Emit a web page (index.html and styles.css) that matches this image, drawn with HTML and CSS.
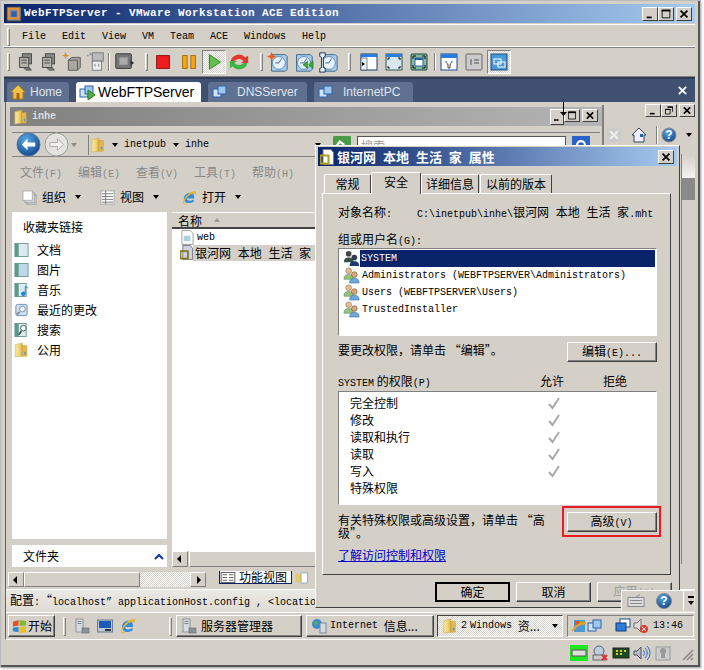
FILE: index.html
```html
<!DOCTYPE html>
<html lang="zh-Hans">
<head>
<meta charset="utf-8">
<title>WebFTPServer - VMware Workstation ACE Edition</title>
<link rel="stylesheet" href="styles.css">
</head>
<body>
<svg class="defs" aria-hidden="true">
  <defs>
    <linearGradient id="fold" x1="0" x2="1" y1="0" y2="0"><stop offset="0" stop-color="#f7e9a8"/><stop offset=".6" stop-color="#f2d36f"/><stop offset="1" stop-color="#d9a93a"/></linearGradient>
    <radialGradient id="blue" cx=".4" cy=".3" r=".8"><stop offset="0" stop-color="#5aa8e6"/><stop offset="1" stop-color="#0a3f86"/></radialGradient>
    <symbol id="i-folder" viewBox="0 0 16 18"><path d="M1 3 9 1v15l-8 1z" fill="url(#fold)" stroke="#c9a84e" stroke-width=".6"/><path d="M9 4h5v12H9z" fill="#e3b94f" stroke="#c09a3a" stroke-width=".6"/><path d="M11 11h2v3h-2z" fill="#5a9ad0"/></symbol>
    <symbol id="i-vm" viewBox="0 0 16 16"><rect x="1" y="5" width="8" height="8" fill="#cfe3f7" stroke="#2a62a8"/><rect x="6" y="2" width="8" height="8" fill="#9cc6ee" stroke="#2a62a8"/></symbol>
    <symbol id="i-users" viewBox="0 0 18 18"><circle cx="6" cy="4" r="3" fill="#e8bc90" stroke="#7a6a50" stroke-width=".6"/><path d="M1 13c0-4 2-5 5-5s5 1 5 5z" fill="#93c47d" stroke="#5f8a50" stroke-width=".6"/><circle cx="12" cy="8" r="3" fill="#d9a877" stroke="#6a4a30" stroke-width=".6"/><path d="M7 17c0-4 2-5 5-5s5 1 5 5z" fill="#6fa8dc" stroke="#3d6fa0" stroke-width=".6"/></symbol>
    <symbol id="i-usersdark" viewBox="0 0 18 18"><circle cx="6" cy="4" r="3" fill="#444"/><path d="M1 13c0-4 2-5 5-5s5 1 5 5z" fill="#37524a"/><circle cx="12" cy="8" r="3" fill="#333a50"/><path d="M7 17c0-4 2-5 5-5s5 1 5 5z" fill="#1b3a72"/></symbol>
    <symbol id="i-check" viewBox="0 0 14 14"><path d="M2 8l3.500 4L12 2" fill="none" stroke="#aaa" stroke-width="2"/></symbol>
    <symbol id="i-server" viewBox="0 0 16 16"><rect x="2" y="1" width="7" height="13" fill="#d6dbe0" stroke="#7d8792" stroke-width=".8"/><rect x="3.500" y="3" width="4" height="1" fill="#7d8792"/><rect x="3.500" y="5" width="4" height="1" fill="#7d8792"/><rect x="8" y="10" width="7" height="5" fill="#8a929a" stroke="#5c646c" stroke-width=".6"/></symbol>
    <symbol id="i-ie" viewBox="0 0 16 16"><path d="M2 9c0-4 4-7 8-6 3 1 3 4 3 6H5c0 3 5 3 7 1l1 2c-3 3-11 3-11-3z" fill="#2f8fdc"/><path d="M1 13C3 6 9 1 14 1c2 1 1 3 0 4-1-2-7-2-12 8 0 1 2 2 4 1-2 2-5 2-5-1z" fill="#f0b429"/></symbol>
    <symbol id="i-clock" viewBox="0 0 24 24"><path d="M5 4h15l2 2v14l-2 2H5z" fill="#a8cdea" stroke="#34618e"/><circle cx="13" cy="13" r="7" fill="#e6f1fa" stroke="#5c87ad"/><path d="M13 13l3-5M13 13H9" stroke="#34618e" fill="none"/></symbol>
    <symbol id="i-ghost" viewBox="0 0 24 24"><rect x="8" y="3" width="10" height="11" fill="#8a8a84" stroke="#444"/><rect x="5" y="7" width="10" height="11" fill="#b4b4ac" stroke="#444"/><path d="M7 10h6M7 13h6" stroke="#444"/><path d="M9 18l3 3h6l-2-3z" fill="#777" stroke="#444" stroke-width=".6"/></symbol>
    <symbol id="i-win" viewBox="0 0 18 18"><rect x="1" y="1" width="16" height="16" fill="#fff" stroke="#1c3c64"/><rect x="1" y="1" width="16" height="3" fill="#2a7dd8"/><rect x="1" y="5" width="6" height="12" fill="#eee" stroke="#1c3c64" stroke-width=".6"/><path d="M2 9l3 2-3 2z"/></symbol>
    <symbol id="i-x" viewBox="0 0 16 14"><path d="M4 3l8 8M12 3l-8 8" stroke="#000" stroke-width="2"/></symbol>
    <symbol id="i-min" viewBox="0 0 16 14"><path d="M4 10h6v2H4z" fill="#000"/></symbol>
    <symbol id="i-max" viewBox="0 0 16 14"><path d="M3.500 2.500h9v9h-9z" fill="none" stroke="#000"/><path d="M3 2h10v2H3z"/></symbol>
    <symbol id="i-res" viewBox="0 0 16 14"><path d="M6.500 2.500h6v6M3.500 5.500h6v6h-6z" fill="none" stroke="#000"/><path d="M6 2h7v1.500H6zM3 5h7v1.500H3z"/></symbol>
  </defs>
</svg>

<div class="vm">
  <header class="vm-title">
    <svg class="vm-logo" viewBox="0 0 18 18"><rect x="1" y="1" width="16" height="16" fill="#7c8aa6" stroke="#333"/><rect x="3" y="3" width="11" height="11" fill="none" stroke="#f09020" stroke-width="2"/><rect x="6" y="6" width="6" height="6" fill="#2a62a8"/></svg>
    <span class="vm-title-text">WebFTPServer - VMware Workstation ACE Edition</span>
    <span class="wctl vm-ctl"><svg class="wb"><use href="#i-min"/></svg><svg class="wb"><use href="#i-max"/></svg><svg class="wb gap"><use href="#i-x"/></svg></span>
  </header>

  <nav class="vm-menu">
    <i class="grip"></i>
    <span>File</span><span>Edit</span><span>View</span><span>VM</span><span>Team</span><span>ACE</span><span>Windows</span><span>Help</span>
  </nav>

  <div class="vm-tools">
    <i class="grip"></i>
    <span class="tb tb-n"><svg><use href="#i-ghost"/></svg></span>
    <span class="tb tb-n"><svg><use href="#i-ghost"/></svg></span>
    <span class="tb tb-n"><svg viewBox="0 0 24 24"><path d="M5 1l1 3 3 1-3 1-1 3-1-3-3-1 3-1z" fill="#d89018"/><path d="M8 10l4-3h9v11l-3 3H8z" fill="#a8a8a0" stroke="#555"/><path d="M8 10h10v11" fill="none" stroke="#555"/></svg></span>
    <span class="tb tb-n"><svg viewBox="0 0 24 24"><path d="M6 2h2v3H6zM3 4h2v2H3z" fill="#999"/><rect x="9" y="2" width="12" height="9" fill="#bbb" stroke="#777"/><rect x="9" y="11" width="10" height="10" fill="#eee" stroke="#777"/><path d="M12 14v3M16 14v3" stroke="#777"/></svg></span>
    <i class="sep"></i>
    <span class="tb"><svg viewBox="0 0 24 24"><rect x="3" y="3" width="17" height="16" rx="1" fill="#777" stroke="#333"/><rect x="7" y="7" width="9" height="8" fill="#aaa"/><path d="M19 10l4 3-4 3z" fill="#333"/></svg></span>
    <i class="grip g9"></i>
    <span class="tb m3"><svg viewBox="0 0 24 24"><rect x="5" y="5" width="14" height="14" fill="#ee1c1c" stroke="#8a1010"/></svg></span>
    <span class="tb m2"><svg viewBox="0 0 24 24"><rect x="5" y="5" width="5" height="14" fill="#f5a516" stroke="#a06a08"/><rect x="14" y="5" width="5" height="14" fill="#f5a516" stroke="#a06a08"/></svg></span>
    <span class="tb m1 tb-on"><svg viewBox="0 0 24 24"><path d="M7 4l12 8-12 8z" fill="#5fc24a" stroke="#2a7a20"/></svg></span>
    <span class="tb m1"><svg viewBox="0 0 24 24"><path d="M3 11a9 8 0 0 1 16-4l3-2v8h-8l3-2a6 5 0 0 0-10 0z" fill="#e23a2a"/><path d="M21 13a9 8 0 0 1-16 4l-3 2v-8h8l-3 2a6 5 0 0 0 10 0z" fill="#3eb53e"/></svg></span>
    <i class="grip g9"></i>
    <span class="tb m3"><svg viewBox="0 0 24 24"><use href="#i-clock"/><path d="M5 1l1.500 3.500L10 6 6.500 7.500 5 11 3.500 7.500 0 6l3.500-1.500z" fill="#ef5a1a"/></svg></span>
    <span class="tb m1"><svg viewBox="0 0 24 24"><use href="#i-clock"/><path d="M12 15l5-4v8zM18 15l5-4v8z" fill="#3aa83a" stroke="#1c6a1c" stroke-width=".6"/></svg></span>
    <span class="tb m1"><svg viewBox="0 0 24 24"><use href="#i-clock"/><path d="M3 2h6v4L7 7v11l2 1v4H3v-4l2-1V7L3 6z" fill="#e8f0f8" stroke="#1a2a4a"/></svg></span>
    <i class="grip g8"></i>
    <span class="tb tb-v m6"><svg><use href="#i-win"/></svg></span>
    <span class="tb tb-v m1"><svg viewBox="0 0 18 18"><rect x="1" y="1" width="16" height="16" fill="#d8e8f0" stroke="#2a5a50"/><rect x="1" y="1" width="16" height="3" fill="#2a7dd8"/><path d="M3 7V5h2M13 5h2v2M15 13v2h-2M5 15H3v-2" stroke="#111" fill="none"/></svg></span>
    <span class="tb tb-v m1"><svg viewBox="0 0 18 18"><rect x="1" y="1" width="16" height="16" rx="1" fill="#84b8a0" stroke="#1c4a40"/><rect x="5" y="5" width="8" height="8" fill="#fff" stroke="#2a62a8"/><rect x="5" y="5" width="8" height="2" fill="#2a62a8"/><path d="M3 6V3h3M12 3h3v3M15 12v3h-3M6 15H3v-3" stroke="#111" fill="none"/></svg></span>
    <i class="sep sep-v"></i>
    <span class="tb tb-v m1"><svg viewBox="0 0 18 18"><rect x="1" y="1" width="16" height="16" fill="#fff" stroke="#1a4a9a"/><rect x="1" y="1" width="16" height="4" fill="#2a7dd8"/><path d="M6 8c0 3 2 2 2 4v3h2v-3c0-2 2-1 2-4" fill="none" stroke="#444"/></svg></span>
    <span class="tb tb-v m1"><svg viewBox="0 0 18 18"><rect x="1" y="1" width="16" height="16" rx="1" fill="#ccc" stroke="#666"/><path d="M6 6v6M9 7h5M9 10h5" stroke="#555"/></svg></span>
    <span class="tb tb-v m1 tb-on"><svg viewBox="0 0 18 18"><rect x="1" y="1" width="16" height="16" fill="#4a9ad8" stroke="#1c4a80"/><rect x="4" y="6" width="7" height="5" fill="none" stroke="#fff"/><rect x="8" y="9" width="7" height="5" fill="none" stroke="#fff"/></svg></span>
  </div>

  <div class="vm-tabs">
    <span class="tab tab-home"><svg viewBox="0 0 16 16"><path d="M1 8l7-7 7 7h-2v7H3V8z" fill="#f0c048" stroke="#b07a18"/><rect x="6.500" y="9" width="3" height="6" fill="#a86a18"/></svg>Home</span>
    <span class="tab tab-active"><svg viewBox="0 0 16 16"><use href="#i-vm"/><path d="M9 6l7 5-7 5z" fill="#4ab23c" stroke="#2a7a20"/></svg>WebFTPServer</span>
    <span class="tab tab-dns"><svg><use href="#i-vm"/></svg><span>DNSServer</span></span>
    <span class="tab tab-pc"><svg><use href="#i-vm"/></svg><span>InternetPC</span></span>
    <svg class="tab-close" viewBox="0 0 12 12"><path d="M2 2l8 8M10 2l-8 8" stroke="#fff" stroke-width="2"/></svg>
  </div>

  <main class="guest">
    <div class="guest-main">
      <aside class="mmc">
        <span class="wctl mmc-ctl"><svg class="wb small"><use href="#i-min"/></svg><svg class="wb small"><use href="#i-res"/></svg><svg class="wb small gap"><use href="#i-x"/></svg></span>
        <div class="mmc-tools">
          <svg viewBox="0 0 16 16"><rect x="1" y="1" width="14" height="14" fill="#ccc"/><path d="M4 4l8 8M12 4l-8 8" stroke="#eee" stroke-width="2"/></svg>
          <svg viewBox="0 0 16 16"><path d="M1 8l7-7 7 7h-2v7H3V8z" fill="#eef" stroke="#345"/><rect x="9" y="7" width="3" height="3" fill="#26a"/></svg>
          <i class="sep"></i>
          <svg viewBox="0 0 16 16"><circle cx="8" cy="8" r="7" fill="url(#blue)" stroke="#888"/><text x="8" y="12" class="qm">?</text></svg>
          <i class="caret"></i>
        </div>
        <div class="mmc-scroll"><i class="track"></i><i class="thumb"></i></div>
      </aside>

      <section class="explorer">
        <div class="ex-title">
          <svg><use href="#i-folder"/></svg><b>inhe</b>
          <span class="wctl"><svg class="wb small"><use href="#i-min"/></svg><svg class="wb small"><use href="#i-max"/></svg><svg class="wb small gap"><use href="#i-x"/></svg></span>
        </div>
        <div class="ex-addr">
          <span class="nav-btn back"><svg viewBox="0 0 26 26"><circle cx="13" cy="13" r="12" fill="url(#blue)" stroke="#5a7a9a"/><path d="M6 13l6-6v4h8v4h-8v4z" fill="#fff"/></svg></span>
          <span class="nav-btn"><svg viewBox="0 0 26 26"><circle cx="13" cy="13" r="12" fill="#e4e2dc" stroke="#999"/><path d="M20 13l-6-6v4H6v4h8v4z" fill="#f2f2f0" stroke="#aaa"/></svg></span>
          <i class="caret light"></i>
          <span class="crumb"><svg><use href="#i-folder"/></svg><i class="caret"></i><span class="lat">inetpub</span><i class="caret"></i><span class="lat">inhe</span></span>
          <i class="caret push"></i>
          <span class="go"><svg viewBox="0 0 16 16"><rect width="16" height="16" rx="1" fill="#4a9a4a"/><path d="M3 9l3-4 4 3" stroke="#fff" fill="none" stroke-width="2"/></svg></span>
          <span class="search">搜索</span>
          <span class="sbtn"><svg viewBox="0 0 16 16"><rect width="16" height="16" fill="#2a62c8"/><circle cx="8" cy="8" r="3.500" fill="none" stroke="#fff" stroke-width="2"/></svg></span>
        </div>
        <div class="ex-menu">
          <span>文件<span class="lat">(F)</span></span><span>编辑<span class="lat">(E)</span></span><span>查看<span class="lat">(V)</span></span><span>工具<span class="lat">(T)</span></span><span>帮助<span class="lat">(H)</span></span>
        </div>
        <div class="ex-tools">
          <span class="ex-tool t1"><svg viewBox="0 0 16 16"><rect x="5" y="5" width="10" height="10" fill="#ddd" stroke="#999"/><rect x="3" y="3" width="10" height="10" fill="#eee" stroke="#999"/><rect x="1" y="1" width="10" height="10" fill="#fff" stroke="#aaa"/></svg>组织<i class="caret"></i></span>
          <span class="ex-tool t2"><svg viewBox="0 0 16 16"><rect x="1" y="1" width="14" height="14" fill="#fff" stroke="#aaa"/><path d="M2 4h12M2 7h12M2 10h12M2 13h12M6 1v14" stroke="#777"/></svg>视图<i class="caret"></i></span>
          <span class="ex-tool t3"><svg><use href="#i-ie"/></svg>打开<i class="caret"></i></span>
        </div>
        <div class="ex-body">
          <div class="ex-nav">
            <div class="nav-links">
              <h2>收藏夹链接</h2>
              <ul>
                <li><svg viewBox="0 0 16 16"><rect x="1" y="1" width="14" height="14" fill="#dfeaf0" stroke="#6a9a8a"/><rect x="1" y="1" width="4" height="14" fill="#5a9a8a"/></svg>文档</li>
                <li><svg viewBox="0 0 16 16"><rect x="1" y="1" width="14" height="14" fill="#bcd8ea" stroke="#6a9a8a"/><rect x="1" y="1" width="4" height="14" fill="#5a9a8a"/></svg>图片</li>
                <li><svg viewBox="0 0 16 16"><rect x="1" y="1" width="12" height="14" fill="#dfeaf0" stroke="#6a9a8a"/><rect x="1" y="1" width="4" height="14" fill="#5a9a8a"/><circle cx="10" cy="12" r="2.500" fill="#1a8ad8"/><path d="M12 12V4l3 2" stroke="#1a8ad8" fill="none"/></svg>音乐</li>
                <li><svg viewBox="0 0 16 16"><rect x="2" y="2" width="12" height="12" rx="2" fill="#cfe0f0" stroke="#6a8ab0"/><circle cx="9" cy="7" r="3" fill="#fff" stroke="#789"/><path d="M6 10l-3 3" stroke="#789" stroke-width="2"/></svg>最近的更改</li>
                <li><svg viewBox="0 0 16 16"><rect x="1" y="1" width="12" height="14" fill="#dfeaf0" stroke="#6a9a8a"/><rect x="1" y="1" width="4" height="14" fill="#5a9a8a"/><circle cx="10" cy="6" r="3" fill="#fff" stroke="#456"/><path d="M8 9l-3 4" stroke="#456" stroke-width="2"/></svg>搜索</li>
                <li><svg><use href="#i-folder"/></svg>公用</li>
              </ul>
            </div>
            <div class="nav-folders">文件夹<svg viewBox="0 0 10 7"><path d="M1 6l4-4 4 4" stroke="#0a3a9a" stroke-width="2" fill="none"/></svg></div>
          </div>
          <div class="ex-list">
            <div class="list-head">名称<i class="up"></i></div>
            <div class="file"><svg viewBox="0 0 14 16"><path d="M1 .5h9l3 3v12H1z" fill="#fff" stroke="#999"/><rect x="3" y="6" width="7" height="6" fill="#a8d4e0"/></svg><span class="lat">web</span></div>
            <div class="file sel"><svg viewBox="0 0 14 16"><path d="M3 .5h8l2.500 3v12H3z" fill="#cdd2e6" stroke="#778"/><rect x=".5" y="6.500" width="8" height="8" fill="none" stroke="#8a7a20" stroke-width="2"/></svg><span class="name wide">银河网 本地 生活 家</span></div>
            <div class="hscroll list-scroll"><i class="arrow left"></i><i class="thumb-h"></i></div>
          </div>
        </div>
      </section>

      <section class="dialog">
        <div class="dlg-title">
          <svg viewBox="0 0 14 16"><path d="M3 .5h8l2.500 3v12H3z" fill="#fff" stroke="#778"/><rect x=".5" y="6.500" width="8" height="8" fill="none" stroke="#b09a20" stroke-width="2"/></svg>
          <b class="wide">银河网 本地 生活 家 属性</b>
          <svg class="wb dlg-x"><use href="#i-x"/></svg>
        </div>
        <div class="dlg-tabs">
          <span class="dt dt1">常规</span><span class="dt dt-on">安全</span><span class="dt dt3">详细信息</span><span class="dt dt4">以前的版本</span>
        </div>
        <div class="dlg-panel">
          <div class="obj"><span>对象名称<span class="lat">:</span></span><span class="lat path">C:\inetpub\inhe\<span class="cjk wide">银河网 本地 生活 家</span>.mht</span></div>
          <label class="lbl-g">组或用户名<span class="lat">(G):</span></label>
          <ul class="users">
            <li class="on"><svg><use href="#i-usersdark"/></svg><span class="lat">SYSTEM</span></li>
            <li><svg><use href="#i-users"/></svg><span class="lat">Administrators (WEBFTPSERVER\Administrators)</span></li>
            <li><svg><use href="#i-users"/></svg><span class="lat">Users (WEBFTPSERVER\Users)</span></li>
            <li><svg><use href="#i-users"/></svg><span class="lat">TrustedInstaller</span></li>
          </ul>
          <div class="row row-edit"><span>要更改权限&#xFF0C;请单击 “编辑”。</span><button class="btn">编辑<span class="lat">(E)...</span></button></div>
          <div class="perm-head"><span class="ph-name"><span class="lat">SYSTEM</span> 的权限<span class="lat">(P)</span></span><span class="ph-a">允许</span><span class="ph-d">拒绝</span></div>
          <ul class="perms">
            <li>完全控制<svg><use href="#i-check"/></svg></li>
            <li>修改<svg><use href="#i-check"/></svg></li>
            <li>读取和执行<svg><use href="#i-check"/></svg></li>
            <li>读取<svg><use href="#i-check"/></svg></li>
            <li>写入<svg><use href="#i-check"/></svg></li>
            <li>特殊权限</li>
          </ul>
          <div class="row row-adv"><p>有关特殊权限或高级设置&#xFF0C;请单击 “高级”。</p><span class="hl"><button class="btn">高级<span class="lat">(V)</span></button></span></div>
          <a class="learn" href="#">了解访问控制和权限</a>
        </div>
        <div class="dlg-btns">
          <button class="btn def">确定</button><button class="btn">取消</button><button class="btn off">应用<span class="lat">(A)</span></button>
        </div>
      </section>

      <svg class="cursor" viewBox="0 0 9 16"><path d="M4 0h1v10H4z" fill="#000"/><path d="M1 10h7l-3.500 4z" fill="#000"/></svg>
    </div>

    <div class="guest-hbar">
      <div class="hscroll outer"><i class="arrow left"></i><i class="thumb-h"></i><i class="dither"></i><i class="arrow right"></i></div>
      <span class="func"><svg viewBox="0 0 16 12"><rect x=".5" y=".5" width="15" height="11" fill="#fff" stroke="#555"/><path d="M2 3h5M2 6h5M2 9h5M9 3h5M9 6h5M9 9h5" stroke="#555"/></svg>功能视图</span>
      <svg class="func-ico" viewBox="0 0 16 14"><path d="M1 3h6v9H1z" fill="#e8c860"/><path d="M7 2h7v11H7z" fill="#fff" stroke="#8ab"/></svg>
    </div>

    <div class="guest-status">配置<span class="lat">:</span>“<span class="lat">localhost” applicationHost.config , &lt;location</span></div>

    <footer class="taskbar">
      <button class="start"><svg viewBox="0 0 16 16"><path d="M1 3l6-2v6l-6 1z" fill="#e8502a"/><path d="M8 1l7 1v5l-7 .5z" fill="#7cbc30"/><path d="M1 9l6-.5V14l-6-1z" fill="#2a8ae0"/><path d="M8 8.500l7-.5v6l-7 1z" fill="#f0c020"/></svg>开始</button>
      <i class="tsep"></i>
      <span class="ql"><svg><use href="#i-server"/></svg><svg viewBox="0 0 16 16"><rect x=".5" y="2" width="15" height="12" fill="#bbc8d8" stroke="#6a7a90"/><rect x="2" y="3" width="12" height="7" fill="#1a5ab8"/><rect x="8" y="11" width="6" height="2" fill="#333"/></svg><svg><use href="#i-ie"/></svg></span>
      <i class="tsep"></i>
      <button class="task t-srv"><svg><use href="#i-server"/></svg>服务器管理器</button>
      <button class="task t-iis"><svg viewBox="0 0 16 16"><circle cx="6" cy="6" r="5" fill="#3a8ad8"/><path d="M3 4l3-1 1 3-3 2z" fill="#5ab04a"/><rect x="9" y="5" width="6" height="10" fill="#d6dbe0" stroke="#789"/></svg><span class="lat">Internet</span> 信息...</button>
      <button class="task t-win"><svg><use href="#i-folder"/></svg><b class="lat">2</b> <span class="lat">Windows</span> 资...<i class="caret"></i></button>
      <div class="tray">
        <svg viewBox="0 0 16 16"><rect x="3" y="2" width="11" height="12" fill="#4a9ad8"/><path d="M4 3h4v4H4z" fill="#e8502a"/><path d="M9 3h4v4H9z" fill="#7cbc30"/><path d="M1 13C4 8 10 5 15 5" stroke="#f0a020" fill="none" stroke-width="2"/></svg>
        <svg><use href="#i-vm"/></svg>
        <svg class="tray-net" viewBox="0 0 16 16"><rect x="5" y="1" width="10" height="8" fill="#fff" stroke="#1a4a9a"/><rect x="1" y="5" width="10" height="8" fill="#2a7dd8" stroke="#123a80"/></svg>
        <svg class="tray-vol" viewBox="0 0 16 16"><path d="M1 5h3l4-4v13l-4-4H1z" fill="#ddd" stroke="#777"/><circle cx="11" cy="11" r="4" fill="#e03a2a"/><path d="M9 9l4 4M13 9l-4 4" stroke="#fff"/></svg>
        <span class="clock">13:46</span>
      </div>
    </footer>

    <div class="langbar">
      <svg class="lb-kb" viewBox="0 0 18 14"><rect x="1" y="4" width="16" height="9" fill="#ddd" stroke="#888"/><path d="M3 7h12M3 10h12M9 4c0-2 3-1 4-3" stroke="#888" fill="none"/></svg>
      <svg class="lb-help" viewBox="0 0 16 16"><circle cx="8" cy="8" r="7.500" fill="url(#blue)" stroke="#888"/><text x="8" y="12" class="qm">?</text></svg>
      <span class="lb-menu"><i></i><i class="caret"></i></span>
    </div>
  </main>

  <footer class="vm-status">
    <svg class="st st-green" viewBox="0 0 18 16"><rect width="18" height="16" fill="#1ee81e"/><rect x="2" y="5" width="14" height="6" fill="#ddd" stroke="#555"/></svg>
    <svg class="st" viewBox="0 0 18 16"><circle cx="8" cy="6" r="5" fill="#bcd" stroke="#567"/><rect x="2" y="10" width="12" height="5" fill="#ccc" stroke="#666"/><path d="M11 10l5 5M16 10l-5 5" stroke="#d33" stroke-width="2"/></svg>
    <svg class="st" viewBox="0 0 18 16"><rect x="1" y="3" width="16" height="10" fill="#1a4a20" stroke="#222"/><path d="M4 6h2M8 6h2M12 6h2M4 9h2M8 9h2" stroke="#d8c820" stroke-width="2"/></svg>
    <svg class="st" viewBox="0 0 18 16"><path d="M1 6h3l4-4v12l-4-4H1z" fill="#bbb" stroke="#456"/><path d="M10 5c2 2 2 4 0 6M12 3c3 3 3 7 0 10M14 1c4 4 4 10 0 14" stroke="#2a62d8" fill="none"/></svg>
    <svg class="st" viewBox="0 0 18 16"><rect x="2" y="2" width="14" height="13" fill="#ccc" stroke="#999"/><circle cx="9" cy="6" r="3" fill="#999"/><rect x="7" y="8" width="4" height="5" fill="#999"/></svg>
    <svg class="resize" viewBox="0 0 12 12"><path d="M11 1L1 11M11 5l-6 6M11 9l-2 2" stroke="#888" stroke-width="1.500"/></svg>
  </footer>
</div>
</body>
</html>
```

FILE: styles.css
```css
* { box-sizing: border-box; }
html, body { margin: 0; padding: 0; }
body { width: 704px; height: 670px; background: #fff; overflow: hidden; font: 12px/16px "Noto Sans CJK SC", "Liberation Sans", sans-serif; color: #000; }
ul { list-style: none; margin: 0; padding: 0; }
p { margin: 0; }
i { font-style: normal; display: block; }
svg { display: block; flex: none; }
.defs { position: absolute; width: 0; height: 0; }
.lat { font: 10px/16px "Liberation Mono", monospace; }
.cjk { font: 12px/16px "Noto Sans CJK SC", sans-serif; }
.wide { word-spacing: 4px; }

/* outer VMware window */
.vm { width: 699px; height: 666px; margin: 1px 0 0 1px; padding: 3px 3px 0; background: #d4d0c8; border-right: 2px solid #555; border-bottom: 2px solid #555; box-shadow: 1px 1px 2px #888; display: flex; flex-direction: column; outline: 1px solid #bbb; }
.vm-title { height: 19px; display: flex; align-items: center; padding: 0 3px 0 2px; background: linear-gradient(90deg, #0a246a, #a6caf0); flex: none; }
.vm-logo { width: 16px; height: 16px; margin-right: 2px; }
.vm-title-text { font: bold 11px/19px "Liberation Mono", monospace; letter-spacing: .4px; color: #fff; }
.wctl { display: flex; margin-left: auto; }
.wb { width: 16px; height: 14px; background: #d4d0c8; border: 1px solid; border-color: #fff #404040 #404040 #fff; }
.wb.gap { margin-left: 2px; }
.vm-menu { height: 24px; margin-top: 1px; padding: 2px 0 0 3px; border-top: 1px solid #fff; border-bottom: 1px solid #808080; display: flex; align-items: center; font: 10px/16px "Liberation Mono", monospace; flex: none; box-shadow: inset 0 -1px 0 #fff; }
.vm-menu span { margin-left: 16px; }
.vm-menu span:first-of-type { margin-left: 12px; }
.grip { width: 3px; height: 18px; background: #d4d0c8; border: 1px solid; border-color: #fff #808080 #808080 #fff; flex: none; }
.vm-tools { height: 29px; display: flex; align-items: center; padding-left: 3px; border-bottom: 1px solid #808080; flex: none; }
.tb { width: 24px; height: 24px; display: flex; align-items: center; justify-content: center; flex: none; }
.tb svg { width: 22px; height: 22px; }
.tb-n { width: 23px; }
.tb:first-of-type { margin-left: 4px; }
.m1 { margin-left: 1px; }
.m2 { margin-left: 2px; }
.m3 { margin-left: 3px; }
.m6 { margin-left: 6px; }
.g8 { margin-left: 8px; }
.g9 { margin-left: 9px; }
.sep { width: 2px; height: 18px; border-left: 1px solid #808080; border-right: 1px solid #fff; margin: 0 2px; flex: none; }
.tb-v svg { width: 18px; height: 18px; }
.sep-v { margin: 0 0 0 3px; }
.tb-on { background: repeating-conic-gradient(#fff 0 25%, #d4d0c8 0 50%) 0 0 / 2px 2px; border: 1px solid; border-color: #808080 #fff #fff #808080; }

.vm-tabs { height: 25px; background: #3f5070; display: flex; align-items: flex-end; padding-left: 3px; color: #fff; flex: none; font: 12px/20px "Liberation Sans", sans-serif; border-top: 2px solid #2f3c55; }
.tab { height: 20px; background: #5f7090; display: flex; align-items: center; border-radius: 3px 3px 0 0; color: #dfe5ef; }
.tab svg { width: 16px; height: 16px; }
.tab-home { width: 62px; padding-left: 3px; gap: 4px; }
.tab-active { width: 125px; margin-left: 7px; background: #fff; color: #000; font-size: 14px; padding-left: 3px; gap: 3px; }
.tab-dns { width: 99px; margin-left: 7px; padding-left: 4px; }
.tab-dns span { margin-left: 9px; }
.tab-pc { width: 99px; margin-left: 7px; padding-left: 4px; }
.tab-pc span { margin-left: 9px; }
.tab-close { width: 11px; height: 11px; margin: 0 7px 6px auto; }

.guest { flex: none; height: 538px; display: flex; flex-direction: column; position: relative; background: #d4d0c8; margin-left: 1px; border-left: 1px solid #666; border-bottom: 1px solid #fff; }
.guest-main { flex: 1; position: relative; }

.mmc { position: absolute; inset: 0; }
.mmc-ctl { position: absolute; right: 0; top: 2px; }
.wb.small { height: 13px; }
.mmc-tools { position: absolute; left: 600px; top: 24px; width: 90px; display: flex; align-items: center; gap: 9px; }
.mmc-tools svg { width: 16px; height: 16px; }
.qm { font: bold 12px "Liberation Sans", sans-serif; fill: #fff; text-anchor: middle; }
.mmc-tools .sep { margin: 0 -6px 0 0; }
.mmc-scroll { position: absolute; right: 0; top: 52px; width: 14px; height: 410px; border-left: 1px solid #808080; background: #d4d0c8; }
.mmc-scroll .track { height: 24px; background: linear-gradient(#d4d0c8, #f4f3f0); }
.mmc-scroll .thumb { height: 22px; background: #8a8a8a; }

.caret { width: 0; height: 0; border: 3.5px solid transparent; border-top: 4px solid #000; border-bottom: 0; flex: none; }
.caret.light { border-top-color: #888; }

.explorer { position: absolute; left: 4px; top: 3px; width: 594px; height: 462px; display: flex; flex-direction: column; background: #d4d0c8; border-right: 2px solid #808080; overflow: hidden; }
.ex-title { height: 19px; margin-top: 2px; background: linear-gradient(90deg, #808080, #b5b5b5); display: flex; align-items: center; padding: 0 4px; flex: none; }
.ex-title svg:first-child { width: 14px; height: 16px; }
.ex-title b { font: bold 10px/16px "Liberation Mono", monospace; color: #ddd; margin-left: 4px; }
.ex-addr { height: 25px; margin: 6px 2px 0; display: flex; align-items: center; border: 1px solid #808080; border-width: 1px 0; padding-left: 4px; position: relative; flex: none; }
.nav-btn svg { width: 25px; height: 25px; }
.nav-btn + .nav-btn { margin-left: 3px; }
.ex-addr .caret.light { margin-left: 2px; }
.crumb { display: flex; align-items: center; gap: 6px; margin-left: 11px; padding-left: 2px; height: 20px; width: 150px; border-left: 1px solid #808080; }
.crumb svg { width: 14px; height: 16px; }
.crumb .lat { margin-right: 1px; }
.crumb .caret:nth-child(2) { margin-left: 1px; }
.caret.push { margin-left: 77px; }
.go { margin-left: 12px; }
.go svg { width: 18px; height: 18px; }
.search { margin-left: 6px; width: 209px; height: 18px; border: 1px solid #555; background: #fff; color: #999; padding-left: 3px; line-height: 18px; }
.sbtn { margin-left: 6px; }
.sbtn svg { width: 18px; height: 18px; }
.ex-menu { height: 23px; margin-top: 5px; display: flex; color: #888; padding-left: 10px; align-items: center; flex: none; }
.ex-menu > span { width: 58px; }
.ex-tools { height: 30px; display: flex; align-items: center; padding-left: 12px; flex: none; margin-top: -3px; }
.ex-tool { display: flex; align-items: center; gap: 7px; }
.ex-tool svg { width: 15px; height: 15px; margin-right: -2px; }
.ex-tool .caret { margin-left: 2px; }
.t2 { margin-left: 19px; }
.t3 { margin-left: 23px; }
.ex-body { flex: 1; display: flex; padding-left: 2px; min-height: 0; }
.ex-nav { width: 155px; display: flex; flex-direction: column; gap: 6px; flex: none; }
.nav-links { flex: 1; background: #fff; padding: 7px 0 0 11px; }
.nav-links h2 { font: 12px/16px "Noto Sans CJK SC", sans-serif; margin: 0 0 5px; }
.nav-links li { height: 20px; display: flex; align-items: center; margin-left: -9px; gap: 8px; }
.nav-links li svg { width: 15px; height: 16px; }
.nav-folders { height: 22px; background: #fff; display: flex; align-items: center; justify-content: space-between; padding: 0 3px 0 11px; }
.nav-folders svg { width: 10px; height: 7px; }
.ex-list { flex: 1; margin-left: 5px; background: #fff; position: relative; display: flex; flex-direction: column; }
.list-head { height: 17px; background: #d4d0c8; border-top: 1px solid #fff; border-bottom: 2px solid #444; display: flex; align-items: center; padding-left: 6px; line-height: 13px; flex: none; }
.up { width: 0; height: 0; border: 3.5px solid transparent; border-bottom: 4px solid #999; border-top: 0; margin-left: 12px; }
.file { height: 17px; display: flex; align-items: center; padding-left: 9px; }
.file svg { width: 13px; height: 15px; }
.file .lat { margin-left: 3px; }
.file.sel { padding-left: 8px; margin-top: -2px; }
.file .name { background: #d4d0c8; padding-left: 2px; width: 124px; white-space: nowrap; }
.hscroll { display: flex; align-items: stretch; background: #d4d0c8; }
.list-scroll { position: absolute; left: 0; right: 0; bottom: 0; height: 16px; }
.arrow { width: 16px; border: 1px solid; border-color: #fff #808080 #808080 #fff; position: relative; flex: none; }
.arrow::after { content: ""; position: absolute; left: 4px; top: 3px; border: 4px solid transparent; }
.arrow.left::after { border-right-color: #000; border-left: 0; }
.arrow.right::after { border-left-color: #000; border-right: 0; left: 6px; }
.thumb-h { flex: 1; border: 1px solid; border-color: #fff #808080 #808080 #fff; }
.list-scroll .thumb-h { margin-left: 1px; }

.guest-hbar { height: 18px; display: flex; align-items: center; padding: 0 0 2px 2px; flex: none; }
.hscroll.outer { width: 198px; height: 15px; }
.outer .thumb-h { flex: none; width: 116px; }
.dither { width: 52px; background: repeating-conic-gradient(#fff 0 25%, #d4d0c8 0 50%) 0 0 / 2px 2px; }
.func { margin-left: 13px; width: 73px; height: 13px; margin-top: -3px; display: flex; align-items: center; gap: 3px; border: 1px solid #0a246a; border-top: 0; background: #fff; overflow: hidden; line-height: 12px; }
.func svg { width: 16px; height: 11px; }
.func-ico { width: 16px; height: 13px; margin: -3px 0 0 2px; }

.guest-status { height: 23px; line-height: 19px; padding-left: 4px; background: linear-gradient(#ebe9e4, #dedbd4); white-space: pre; overflow: hidden; flex: none; border-top: 1px solid #fff; }
.guest-status .lat { line-height: 19px; }

.taskbar { height: 27px; display: flex; align-items: center; padding-left: 2px; flex: none; border-top: 1px solid #fff; }
.start, .task, .btn { font: 12px/16px "Noto Sans CJK SC", sans-serif; background: #d4d0c8; border: 1px solid; border-color: #fff #404040 #404040 #fff; padding: 0; color: #000; box-shadow: inset -1px -1px 0 #808080; }
.start { width: 47px; height: 22px; display: flex; align-items: center; padding-left: 3px; gap: 1px; white-space: nowrap; }
.start svg { width: 15px; height: 15px; }
.tsep { width: 3px; height: 19px; margin-left: 8px; border: 1px solid; border-color: #fff #808080 #808080 #fff; flex: none; }
.ql { display: flex; gap: 7px; margin-left: 8px; width: 87px; }
.ql svg { width: 16px; height: 16px; }
.task { height: 22px; display: flex; align-items: center; padding-left: 4px; gap: 4px; white-space: pre; }
.task svg { width: 16px; height: 16px; }
.t-srv { width: 126px; margin-left: 4px; }
.t-iis { width: 128px; margin-left: 4px; gap: 3px; }
.t-win { width: 126px; margin-left: 3px; background: repeating-conic-gradient(#fff 0 25%, #d4d0c8 0 50%) 0 0 / 2px 2px; border-color: #404040 #fff #fff #404040; box-shadow: none; gap: 3px; }
.t-win .caret { margin-left: auto; margin-right: 4px; }
.tray { width: 127px; height: 22px; margin-left: 4px; display: flex; align-items: center; padding-left: 3px; border: 1px solid; border-color: #808080 #fff #fff #808080; }
.tray svg { width: 16px; height: 16px; }
.tray-net { margin-left: 12px; }
.tray-vol { margin-left: 2px; }
.clock { margin-left: 4px; font: 10px/16px "Liberation Mono", monospace; }

.langbar { position: absolute; left: 615px; top: 488px; width: 73px; height: 21px; background: #d4d0c8; display: flex; align-items: center; padding-left: 5px; border: 1px solid; border-color: #fff transparent transparent #fff; z-index: 3; }
.lb-kb { width: 18px; height: 15px; }
.lb-help { width: 16px; height: 16px; margin-left: 11px; }
.lb-menu { margin-left: 11px; border-left: 1px solid #fff; padding-left: 4px; height: 20px; display: flex; flex-direction: column; justify-content: center; gap: 3px; }
.lb-menu i:first-child { width: 6px; height: 2px; background: #000; }

.cursor { position: absolute; left: 553px; top: 0; width: 9px; height: 16px; z-index: 1; }

/* properties dialog */
.dialog { position: absolute; left: 309px; top: 43px; width: 365px; height: 463px; background: #d4d0c8; border: 1px solid; border-color: #fff #404040 #404040 #fff; padding: 1px 2px 0; display: flex; flex-direction: column; z-index: 2; }
.dlg-title { height: 19px; background: linear-gradient(90deg, #0a246a, #a6caf0); display: flex; align-items: center; color: #fff; padding: 0 3px 0 2px; flex: none; }
.dlg-title > svg:first-child { width: 14px; height: 16px; }
.dlg-title b { font: bold 13px/19px "Noto Sans CJK SC", sans-serif; margin-left: 3px; white-space: pre; }
.dlg-x { margin-left: auto; }
.dlg-tabs { height: 27px; display: flex; align-items: flex-end; padding-left: 6px; flex: none; position: relative; z-index: 1; }
.dt { height: 19px; display: flex; align-items: center; justify-content: center; border: 1px solid; border-color: #fff #404040 transparent #fff; border-radius: 2px 2px 0 0; border-bottom: 0; }
.dt1 { width: 47px; }
.dt-on { width: 50px; height: 22px; margin-bottom: -1px; background: #d4d0c8; position: relative; z-index: 1; padding-bottom: 3px; }
.dt3 { width: 58px; }
.dt4 { width: 72px; margin-left: 1px; }
.dlg-panel { width: 349px; height: 382px; margin-left: 4px; border: 1px solid; border-color: #fff #404040 #404040 #fff; padding: 10px 13px 0 15px; flex: none; }
.obj { display: flex; height: 16px; }
.path { margin-left: 25px; white-space: pre; }
.lbl-g { display: block; margin-top: 11px; height: 16px; }
.users { height: 88px; margin-top: 1px; background: #fff; border: 1px solid; border-color: #808080 #fff #fff #808080; padding: 1px; }
.users li { height: 17px; display: flex; align-items: center; padding-left: 3px; }
.users svg { width: 17px; height: 17px; }
.users .lat { margin-left: 1px; flex: 1; padding-left: 1px; }
.users .on .lat { background: #0a246a; color: #fff; line-height: 17px; margin-left: 0; }
.row { display: flex; justify-content: space-between; }
.row-edit { margin-top: 6px; align-items: flex-start; }
.btn { width: 90px; height: 20px; }
.btn .lat { line-height: 14px; }
.perm-head { display: flex; margin-top: 11px; height: 16px; }
.ph-name { width: 202px; }
.ph-d { margin-left: 39px; }
.perms { height: 114px; margin-top: 2px; background: #fff; border: 1px solid; border-color: #808080 #fff #fff #808080; padding: 2px 0 0 11px; }
.perms li { height: 17px; display: flex; align-items: center; position: relative; }
.perms svg { position: absolute; left: 197px; top: 2px; width: 14px; height: 14px; }
.row-adv { margin-top: 7px; height: 32px; position: relative; }
.row-adv p { width: 212px; line-height: 13px; padding-top: 1px; }
.hl { position: absolute; right: -4px; top: -6px; width: 99px; height: 31px; border: 2px solid #e81c24; display: flex; align-items: center; justify-content: center; }
.learn { display: block; margin-top: 3px; color: #0000c8; line-height: 16px; }
.dlg-btns { display: flex; gap: 6px; padding-left: 117px; margin-top: 7px; }
.dlg-btns .btn { width: 75px; }
.btn.def { border: 2px solid #000; box-shadow: none; }
.btn.off { color: #999; }

/* host status bar */
.vm-status { flex: 1; display: flex; justify-content: flex-end; align-items: center; gap: 2px; padding: 0 1px 0 0; min-height: 0; }
.st { width: 18px; height: 16px; margin-left: 1px; }
.resize { width: 12px; height: 12px; margin: 4px 0 0 8px; }
```
